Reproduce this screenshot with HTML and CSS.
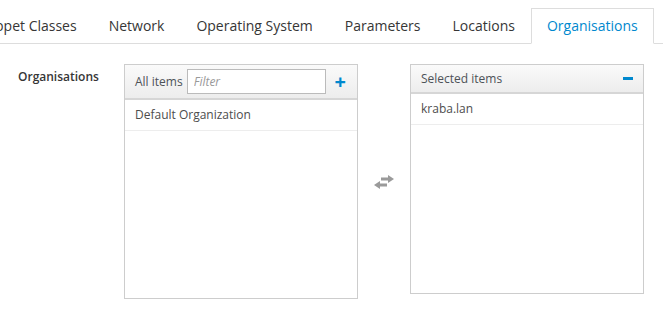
FILE: index.html
```html
<!DOCTYPE html>
<html>
	<head>
		<meta charset="UTF-8">
		<title>Organisations</title>
		<link rel="stylesheet" href="styles.css">
	</head>
	<body>

		<!--标签栏-->
		<ul class="tabs">
			<li><a href="javascript:;">Puppet Classes</a></li>
			<li><a href="javascript:;">Network</a></li>
			<li><a href="javascript:;">Operating System</a></li>
			<li><a href="javascript:;">Parameters</a></li>
			<li><a href="javascript:;">Locations</a></li>
			<li class="active"><a href="javascript:;">Organisations</a></li>
		</ul>

		<!--表单行-->
		<div class="form-row">
			<label class="form-label">Organisations</label>

			<div class="ms-box ms-left">
				<div class="ms-head">
					<span class="ms-title">All items</span>
					<input class="ms-filter" type="text" placeholder="Filter">
					<span class="ms-plus">+</span>
				</div>
				<ul class="ms-list">
					<li>Default Organization</li>
				</ul>
			</div>

			<div class="ms-swap">
				<svg width="22" height="16" viewBox="0 0 22 16">
					<path d="M8 3.5 H15 V1 L21 5 L15 9 V6.5 H8 Z" fill="#9a9a9a"/>
					<path d="M14 9.5 H7 V7 L1 11 L7 15 V12.5 H14 Z" fill="#9a9a9a"/>
				</svg>
			</div>

			<div class="ms-box ms-right">
				<div class="ms-head">
					<span class="ms-title">Selected items</span>
					<span class="ms-minus"></span>
				</div>
				<ul class="ms-list">
					<li>kraba.lan</li>
				</ul>
			</div>
		</div>

	</body>
</html>
```

FILE: styles.css
```css
/*去除默认样式*/
*{
	margin: 0;
	padding: 0;
	box-sizing: border-box;
}

body{
	padding-top: 8px;
	font-family: "Open Sans", "Liberation Sans", sans-serif;
	color: #363636;
	background-color: #fff;
	overflow: hidden;
}

/*标签栏*/
.tabs{
	list-style: none;
	display: flex;
	border-bottom: 1px solid #ddd;
	margin-left: -38px;
	width: 720px;
}

.tabs li{
	margin-bottom: -1px;
}

.tabs a{
	display: block;
	padding: 7px 15px;
	line-height: 20px;
	font-size: 14px;
	color: #363636;
	text-decoration: none;
	border: 1px solid transparent;
}

.tabs .active a{
	color: #0088ce;
	background-color: #fff;
	border-color: #ddd;
	border-bottom-color: #fff;
}

/*表单行*/
.form-row{
	display: flex;
	align-items: flex-start;
	margin-top: 20px;
}

.form-label{
	width: 124px;
	padding: 4px 0 0 18px;
	font-size: 12px;
	font-weight: 600;
	line-height: 18px;
}

/*多选框*/
.ms-box{
	width: 234px;
	border: 1px solid #cdcdcd;
	background-color: #fff;
	font-size: 12px;
}

.ms-left{
	height: 235px;
}

.ms-right{
	height: 230px;
}

.ms-head{
	display: flex;
	align-items: center;
	background: linear-gradient(#fafafa, #ededed);
	border-bottom: 2px solid #d6d6d6;
}

.ms-left .ms-head{
	height: 35px;
	padding: 0 10px;
}

.ms-right .ms-head{
	height: 29px;
	padding: 0 10px;
}

.ms-title{
	color: #4d5258;
}

.ms-filter{
	width: 139px;
	height: 25px;
	margin-left: 4px;
	padding: 0 6px;
	border: 1px solid #bbb;
	font-family: inherit;
	font-size: 12px;
	outline: none;
}

.ms-filter::placeholder{
	color: #999;
	font-style: italic;
}

.ms-plus{
	margin-left: auto;
	margin-right: 1px;
	font-size: 20px;
	font-weight: 700;
	line-height: 20px;
	color: #0088ce;
}

.ms-minus{
	margin-left: auto;
	margin-right: 0px;
	width: 10px;
	height: 3px;
	background-color: #0088ce;
}

.ms-list{
	list-style: none;
}

.ms-list li{
	height: 31px;
	padding: 0 10px;
	line-height: 30px;
	border-bottom: 1px solid #ededed;
	color: #4d4d4d;
}

/*交换图标*/
.ms-swap{
	width: 52px;
	padding-top: 110px;
	display: flex;
	justify-content: center;
}
```
